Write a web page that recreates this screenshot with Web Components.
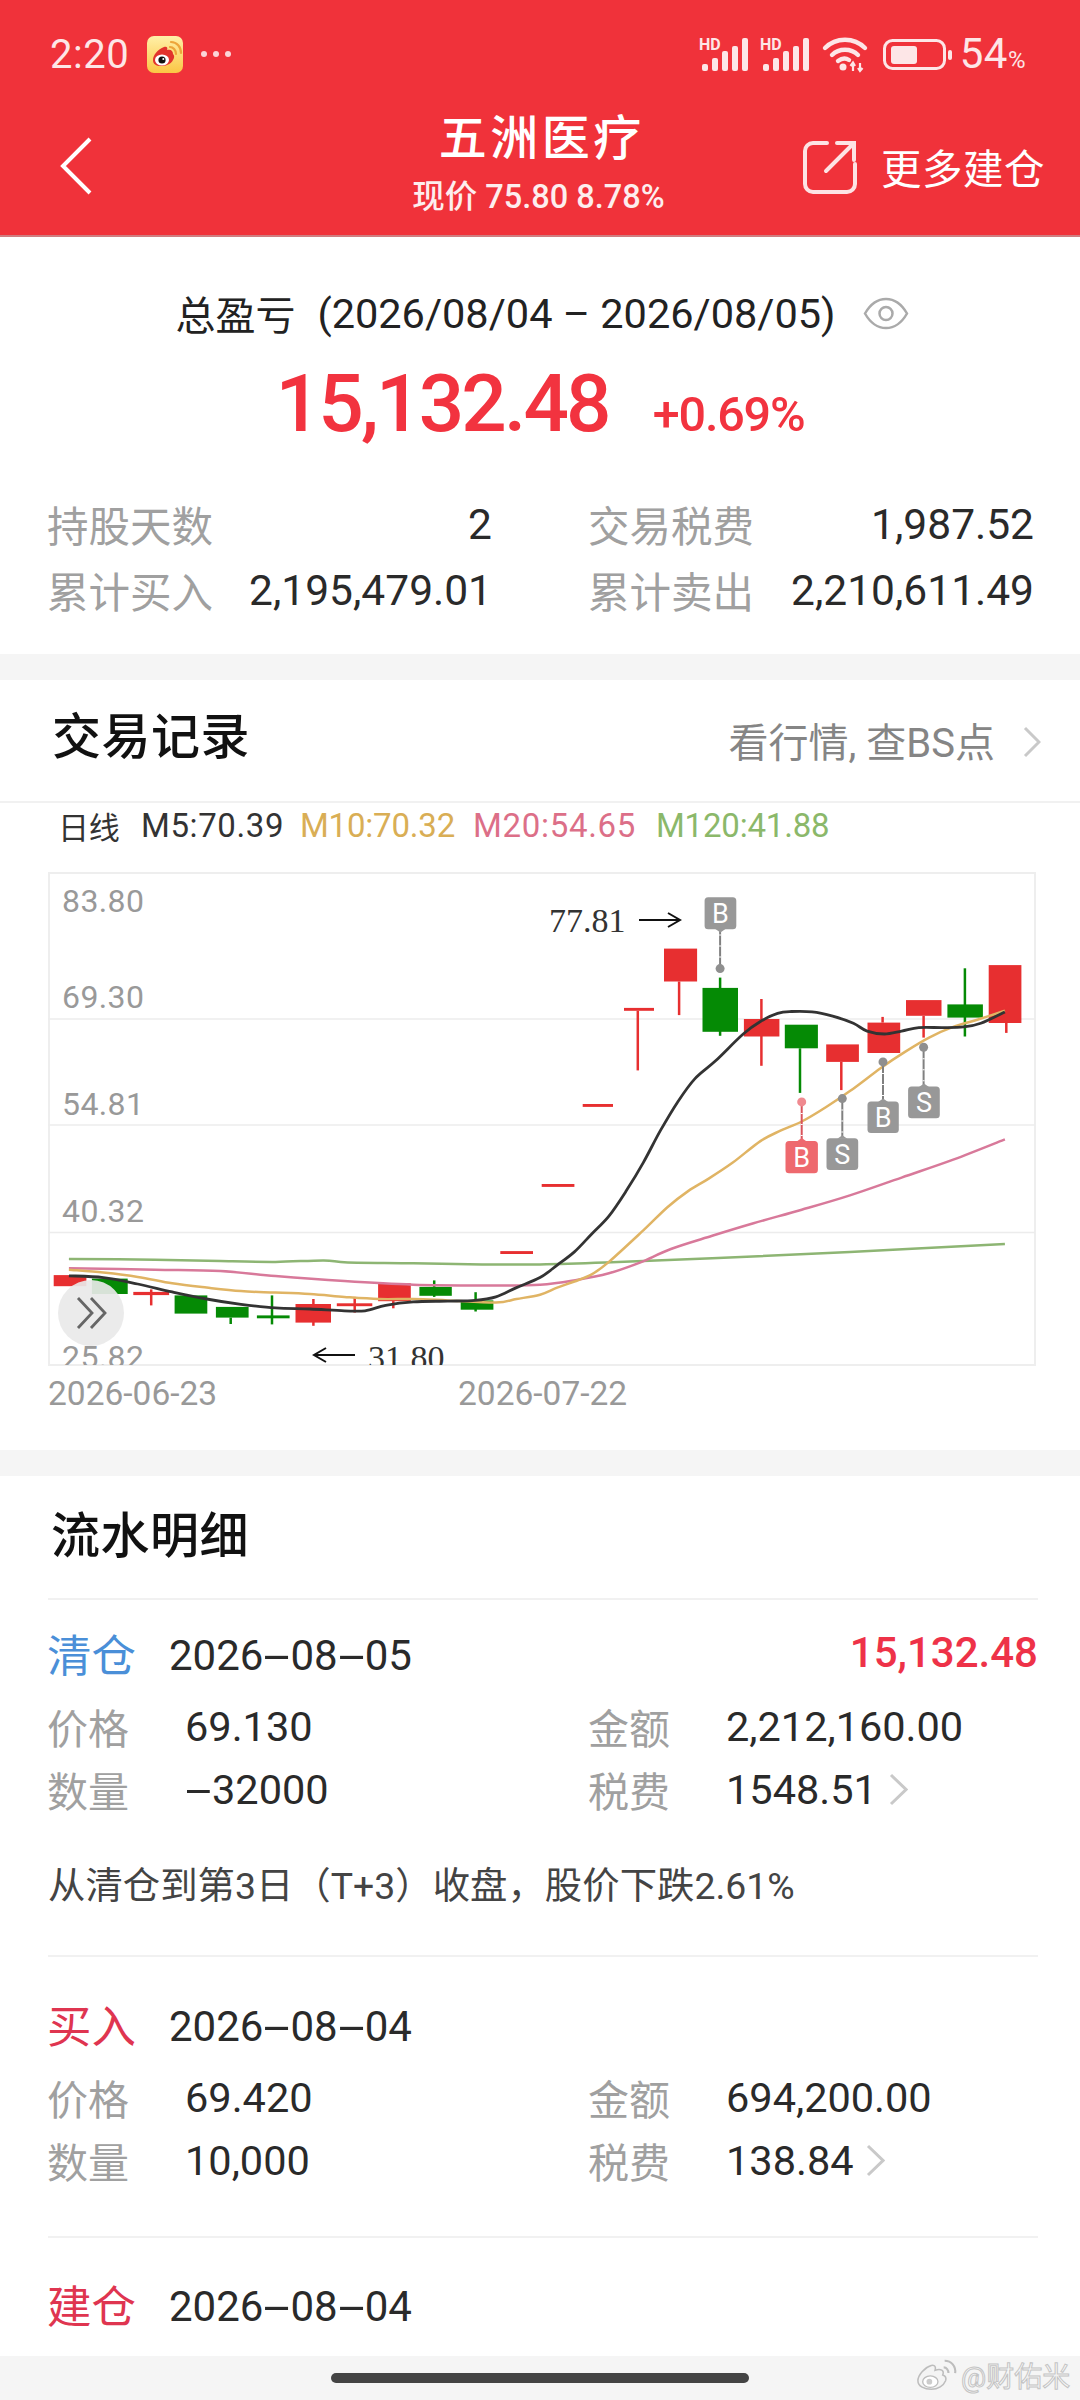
<!DOCTYPE html>
<html lang="zh-CN">
<head>
<meta charset="utf-8">
<title>五洲医疗</title>
<style>
  html,body{margin:0;padding:0;background:#fff}
  body{width:1080px;height:2400px;overflow:hidden;display:flex;flex-direction:column;position:relative;
    font-family:Roboto,"Noto Sans CJK SC",sans-serif;color:#333}
</style>
</head>
<body>
<status-bar></status-bar>
<nav-header></nav-header>

<profit-summary></profit-summary>
<gap-band></gap-band>

<trade-chart></trade-chart>
<gap-band></gap-band>

<flow-section>
  <flow-item style="--pt:32px" kind-color="#4a8fd8">
    <span slot="kind">清仓</span>
    <span slot="date">2026<wide-dash>-</wide-dash>08<wide-dash>-</wide-dash>05</span>
    <span slot="pl">15,132.48</span>
    <kv-pair label="价格">69.130</kv-pair>
    <kv-pair label="金额">2,212,160.00</kv-pair>
    <kv-pair label="数量"><wide-dash>-</wide-dash>32000</kv-pair>
    <kv-pair label="税费" arrow>1548.51</kv-pair>
    <span slot="note">从清仓到第3日（T+3）收盘，股价下跌2.61%</span>
  </flow-item>
  <flow-item style="--pt:46px" kind-color="#df3550">
    <span slot="kind">买入</span>
    <span slot="date">2026<wide-dash>-</wide-dash>08<wide-dash>-</wide-dash>04</span>
    <kv-pair label="价格">69.420</kv-pair>
    <kv-pair label="金额">694,200.00</kv-pair>
    <kv-pair label="数量">10,000</kv-pair>
    <kv-pair label="税费" arrow>138.84</kv-pair>
  </flow-item>
  <flow-item style="--pt:45px" kind-color="#df3550" compact>
    <span slot="kind">建仓</span>
    <span slot="date">2026<wide-dash>-</wide-dash>08<wide-dash>-</wide-dash>04</span>
  </flow-item>
</flow-section>

<home-bar></home-bar>

<script>
function define(name, html, extra){
  customElements.define(name, class extends HTMLElement{
    constructor(){
      super();
      const r=this.attachShadow({mode:'open'});
      r.innerHTML=html;
    }
    connectedCallback(){ if(extra) extra.call(this,this.shadowRoot); }
  });
}

const bars=`<g fill="#fde6e7"><text x="0" y="12" font-family="Roboto" font-size="16" font-weight="700">HD</text>
    <rect x="3" y="26" width="6" height="7" rx="2"/><rect x="13" y="20" width="6" height="13" rx="2"/><rect x="23" y="13" width="6" height="20" rx="2"/><rect x="33" y="8" width="6" height="25" rx="2"/><rect x="43" y="0" width="6" height="33" rx="2"/></g>`;

define('status-bar',`
<style>
:host{display:flex;align-items:center;height:108px;box-sizing:border-box;background:#f0323a;color:#fde6e7;padding:0 54px 0 50px;flex:none}
.time{font-size:40px;width:97px;letter-spacing:.5px}
.dots{margin-left:18px;display:flex;gap:6px}
.dots i{width:6px;height:6px;border-radius:50%;background:#fbd5d7;margin-right:0}
.right{margin-left:auto;display:flex;align-items:center}
svg{display:block;overflow:visible}
.pct{font-size:42px;margin-left:9px;line-height:1;display:flex;align-items:baseline;letter-spacing:.5px}
.pct small{font-size:24px}
</style>
<span class="time">2:20</span>
<svg width="36" height="37" viewBox="0 0 36 37">
  <defs><linearGradient id="wb" x1="0" y1="0" x2="0" y2="1"><stop offset="0" stop-color="#fff0a8"/><stop offset="1" stop-color="#fbc644"/></linearGradient></defs>
  <rect width="36" height="37" rx="7" fill="url(#wb)"/>
  <path d="M6 24c0-5 5-11 11-13 3-1 4 1 3 3 4-1 6 1 6 4 1 1 2 3 0 6-2 4-7 6-12 6-5 0-8-2-8-6z" fill="#e2332c"/>
  <ellipse cx="15" cy="24" rx="7" ry="5.5" fill="#fff"/><circle cx="15" cy="24" r="3.6" fill="#111"/><circle cx="16.3" cy="23" r="1" fill="#fff"/>
  <path d="M23 11c3 0 6 3 6 7M24 6c6 0 10 5 10 11" fill="none" stroke="#eda53a" stroke-width="2.2" stroke-linecap="round"/>
</svg>
<span class="dots"><i></i><i></i><i></i></span>
<span class="right">
  <svg width="50" height="33" viewBox="0 0 50 33" style="margin-right:11px">${bars}</svg>
  <svg width="50" height="33" viewBox="0 0 50 33" style="margin-right:12px">${bars}</svg>
  <svg width="46" height="35" viewBox="0 0 46 35" style="margin-right:15px"><g fill="none" stroke="#fde6e7" stroke-width="4.4" stroke-linecap="round"><path d="M3 11c11-11 29-11 40 0"/><path d="M10 18c7-7 19-7 26 0"/><path d="M16 24c4-3 8-3 11-1"/></g><circle cx="21" cy="30" r="3.5" fill="#fde6e7"/><path d="M31 26v8M38 26v8M28.500 29l2.500-3.500 2 3.500M36 31l2 3 2.500-3" fill="none" stroke="#fde6e7" stroke-width="2.200"/></svg>
  <svg width="70" height="31" viewBox="0 0 70 31"><rect x="1.500" y="1.500" width="60" height="28" rx="8" fill="none" stroke="#fde6e7" stroke-width="3"/><rect x="8" y="7" width="26" height="18" rx="3" fill="#fde6e7"/><rect x="65" y="11" width="4" height="10" rx="2" fill="#fde6e7"/></svg>
  <span class="pct" style="margin-left:7px">54<small>%</small></span>
</span>`);

define('nav-header',`
<style>
:host{display:grid;grid-template-columns:1fr auto 1fr;height:129px;box-sizing:border-box;background:#f0323a;border-bottom:2px solid #cf7d80;color:#fff;flex:none}
.back{padding:29px 0 0 60px}
.mid{text-align:center;margin-top:3px}
.t{font-size:48px;line-height:56px;font-weight:500;letter-spacing:3.500px;margin-right:-3.500px}
.s{font-size:32.500px;line-height:40px;margin-top:10px;color:#fdeeee;font-weight:500;margin-left:-3px}
.more{display:flex;justify-content:flex-end;align-items:flex-start;padding:32px 35px 0 0;font-size:40.500px;line-height:50px}
.more svg{margin-right:24px}
.more span{letter-spacing:.5px;margin-top:5px}
svg{display:block}
</style>
<div class="back"><svg width="32" height="58" viewBox="0 0 32 58"><path d="M30 2 3 29l27 27" fill="none" stroke="#fff" stroke-width="4"/></svg></div>
<div class="mid"><div class="t">五洲医疗</div><div class="s">现价 75.80 8.78%</div></div>
<div class="more"><svg width="54" height="54" viewBox="0 0 54 54"><path d="M24 3H10A8 8 0 0 0 2 11v33a8 8 0 0 0 8 8h34a8 8 0 0 0 8-8V24" fill="none" stroke="#fde3e4" stroke-width="4" stroke-linecap="round"/><path d="M23 31 50 4M34 3h17v17" fill="none" stroke="#fde3e4" stroke-width="4" stroke-linecap="round"/></svg><span>更多建仓</span></div>`);

define('profit-summary',`
<style>
:host{display:block;height:417px;box-sizing:border-box;padding-top:55px;background:#fff;flex:none}
.range{display:flex;justify-content:center;align-items:center;height:42px;font-size:40px;color:#222;padding-left:4px}
.range b{font-weight:400}
.range span{margin-left:22px;font-size:41.500px;white-space:pre}
.range svg{margin-left:27px}
.profit{display:flex;justify-content:center;align-items:baseline;height:84px;margin-top:28px;color:#f2333f}
.big{font-size:80px;font-weight:500;line-height:84px;letter-spacing:-2.800px}
.pc{font-size:48.500px;margin-left:44px;font-weight:500;letter-spacing:-1.200px}
.grid{display:grid;grid-template-columns:445px 446px;column-gap:96px;padding-left:47px;margin-top:45px;grid-auto-rows:66px}
.cell{display:flex;justify-content:space-between;align-items:center;font-size:42.500px;color:#2a2a2a}
.cell span{font-size:41.500px;color:#a0a0a0}
</style>
<div class="range"><b>总盈亏</b><span>(2026/08/04 – 2026/08/05)</span>
<svg width="46" height="33" viewBox="0 0 46 33"><path d="M2 16.500C8 6 15 2 23 2s15 4 21 14.500C38 27 31 31 23 31S8 27 2 16.500z" fill="none" stroke="#aaa" stroke-width="2.500"/><circle cx="23" cy="16.500" r="6.500" fill="none" stroke="#aaa" stroke-width="2.500"/></svg></div>
<div class="profit"><span class="big">15,132.48</span><span class="pc">+0.69%</span></div>
<div class="grid">
  <div class="cell"><span>持股天数</span>2</div>
  <div class="cell"><span>交易税费</span>1,987.52</div>
  <div class="cell"><span>累计买入</span>2,195,479.01</div>
  <div class="cell"><span>累计卖出</span>2,210,611.49</div>
</div>`);

define('gap-band',`<style>:host{display:block;height:26px;background:#f5f5f5;flex:none}</style>`);

const X=(z,s)=>s?540+z/2.904:z/2.904, Y=z=>860+z/2.8, f=n=>n.toFixed(1);
const candles=[
 [0,156,251,1165,1196,'r'],[0,267,371,1175,1218,'g'],[0,387,491,1212,1221,'r',439,1205,1250],
 [0,507,602,1222,1273,'g'],[0,627,722,1254,1284,'g',670,1284,1302],[0,746,841,1278,1286,'g',790,1222,1303],
 [0,858,961,1246,1298,'r',910,1232,1307],[0,978,1081,1244,1252,'r',1030,1226,1270],[0,1098,1193,1188,1238,'r',1142,1238,1258],
 [0,1218,1312,1198,1223,'g',1261,1180,1226],[0,1338,1433,1236,1262,'g',1381,1213,1267],[0,1453,1548,1098,1106,'r'],
 [1,5,100,910,918,'r'],[1,124,212,686,694,'r'],[1,244,331,417,425,'r',284,425,592],[1,360,456,251,343,'r',404,343,437],
 [1,472,575,361,484,'g',523,332,495],[1,592,695,448,497,'r',643,392,579],[1,711,807,464,530,'g',755,530,655],
 [1,831,926,519,568,'r',875,568,647],[1,951,1046,458,543,'r',995,442,458],[1,1063,1166,395,439,'r',1114,439,500],
 [1,1183,1286,407,444,'g',1234,306,497],[1,1303,1398,297,459,'r',1354,459,487]];
const lines={
 '#8db573':[[[200,1120],[450,1122],[640,1126],[800,1128],[940,1124],[1010,1130],[1200,1132],[1400,1135]],[[0,1135],[190,1130],[500,1118],[900,1100],[1350,1078]]],
 '#d8799a':[[[200,1146],[450,1150],[640,1154],[800,1168],[1000,1182],[1200,1192],[1400,1194]],[[0,1192],[110,1178],[200,1160],[290,1130],[380,1092],[500,1055],[620,1020],[760,982],[900,942],[1050,892],[1200,842],[1350,785]]],
 '#e0b464':[[[200,1150],[300,1158],[400,1170],[500,1188],[600,1200],[700,1210],[800,1214],[900,1218],[1000,1226],[1100,1232],[1200,1232],[1300,1236],[1440,1242],[1500,1232]],[[0,1220],[50,1200],[100,1183],[150,1163],[200,1128],[300,1040],[370,975],[430,930],[490,895],[560,850],[640,790],[700,760],[760,735],[830,695],[900,650],[990,585],[1060,540],[1130,500],[1200,470],[1270,450],[1350,425]]],
 '#333333':[[[200,1167],[300,1172],[400,1190],[500,1212],[600,1232],[700,1247],[800,1257],[900,1260],[1000,1265],[1060,1265],[1120,1250],[1200,1240],[1300,1238],[1380,1236],[1440,1226],[1500,1200]],[[0,1172],[50,1137],[100,1100],[150,1050],[200,1000],[250,930],[300,850],[350,760],[400,680],[450,615],[510,565],[590,490],[640,455],[690,432],[730,427],[790,428],[850,440],[910,460],[950,482],[1000,490],[1050,482],[1100,472],[1170,472],[1230,470],[1280,460],[1350,428]]]
};
function smooth(pts){
  let d='M'+f(pts[0][0])+' '+f(pts[0][1]);
  for(let i=0;i<pts.length-1;i++){
    const p0=pts[i-1]||pts[i],p1=pts[i],p2=pts[i+1],p3=pts[i+2]||p2;
    d+='C'+f(p1[0]+(p2[0]-p0[0])/6)+' '+f(p1[1]+(p2[1]-p0[1])/6)+' '+f(p2[0]-(p3[0]-p1[0])/6)+' '+f(p2[1]-(p3[1]-p1[1])/6)+' '+f(p2[0])+' '+f(p2[1]);
  }
  return d;
}
function chartBody(){
  const col={r:'#e72f30',g:'#058a05'}; let s='';
  s+='<rect x="49" y="874" width="986" height="492" fill="#fff" stroke="#eeeeee" stroke-width="2"/>';
  [1020,1126,1233.5].forEach(y=>s+=`<line x1="48" x2="1035" y1="${y}" y2="${y}" stroke="#ececec" stroke-width="1.500"/>`);
  [['83.80',913],['69.30',1009],['54.81',1116],['40.32',1223],['25.82',1369]].forEach(a=>s+=`<text x="62" y="${a[1]}" class="ax" clip-path="url(#cp)">${a[0]}</text>`);
  candles.forEach(c=>{
    const [side,x1,x2,y1,y2,k,wx,w1,w2]=c;
    if(wx!==undefined) s+=`<line x1="${f(X(wx,side))}" x2="${f(X(wx,side))}" y1="${f(Y(w1))}" y2="${f(Y(w2))}" stroke="${col[k]}" stroke-width="2.500"/>`;
    s+=`<rect x="${f(X(x1,side))}" y="${f(Y(y1))}" width="${f((x2-x1)/2.904)}" height="${f((y2-y1)/2.8)}" fill="${col[k]}"/>`;
  });
  for(const c in lines){
    const pts=lines[c][0].map(p=>[X(p[0],0),Y(p[1])]).concat(lines[c][1].map(p=>[X(p[0],1),Y(p[1])]));
    s+=`<path d="${smooth(pts)}" fill="none" stroke="${c}" stroke-width="${c==='#333333'?2.800:2.500}"/>`;
  }
  [[478,570,107,197,'B','#989898','#8f8f8f',523,307],
   [713,807,790,880,'B','#ee696e','#f08a90',760,680],
   [832,924,782,871,'S','#989898','#8f8f8f',878,671],
   [951,1042,679,767,'B','#989898','#8f8f8f',996,568],
   [1069,1161,637,726,'S','#989898','#8f8f8f',1114,527]].forEach(m=>{
    const [a,b,t,u,l,c,dc,dx,dy]=m, xx=f(X(dx,1)), w=(b-a)/2.904, h=(u-t)/2.8, bx=X(a,1), by=Y(t), below=dy<t;
    s+=`<line x1="${xx}" x2="${xx}" y1="${f(Y(dy))}" y2="${f(below?by:by+h)}" stroke="${l==='B'&&c==='#ee696e'?'#d9545c':'#808080'}" stroke-width="2"/>`;
    s+=`<line x1="${xx}" x2="${xx}" y1="${f(Y(dy))}" y2="${f(below?by:by+h)}" stroke="#fff" stroke-width="2" stroke-dasharray="1 10" />`;
    s+=`<circle cx="${xx}" cy="${f(Y(dy))}" r="4.500" fill="${dc}"/>`;
    s+=`<rect x="${f(bx)}" y="${f(by)}" width="${f(w)}" height="${f(h)}" rx="3.500" fill="${c}"/>`;
    const ty=below?by-3:by+h+3;
    s+=`<path d="M${f(bx+w/2-5)} ${f(below?by+.5:by+h-.5)}L${f(bx+w/2)} ${f(ty)}L${f(bx+w/2+5)} ${f(below?by+.5:by+h-.5)}z" fill="${c}"/>`;
    s+=`<text x="${f(bx+w/2)}" y="${f(by+h/2+9.500)}" text-anchor="middle" class="mk">${l}</text>`;
  });
  s+=`<text x="549" y="933" class="ex">77.81</text>`;
  s+=`<path d="M639 921H679M668 914l12 7-12 7" fill="none" stroke="#111" stroke-width="2"/>`;
  s+=`<path d="M355 1356H315M326 1349l-12 7 12 7" fill="none" stroke="#111" stroke-width="2"/>`;
  s+=`<text x="368" y="1370" class="ex" clip-path="url(#cp)">31.80</text>`;
  s+=`<circle cx="91" cy="1314" r="33" fill="#e9e9e9" fill-opacity=".92"/>`;
  s+=`<path d="M78 1299l14 15-14 15M91 1299l14 15-14 15" fill="none" stroke="#666" stroke-width="2.800"/>`;
  return s;
}
define('trade-chart',`
<style>
:host{display:block;height:770px;background:#fff;flex:none;position:relative}
.head{display:flex;align-items:center;height:123px;box-sizing:border-box;padding:0 39px 6px 52px;border-bottom:2px solid #f1f1f1;margin-bottom:0}
.head h2{margin:0;font-size:49px;font-weight:500;color:#111;letter-spacing:.5px;line-height:1}
.link{margin-left:auto;display:flex;align-items:center;font-size:40px;color:#858585;padding-top:5px}
.link svg{margin-left:28px;margin-top:4px}
.legend{display:flex;height:44px;align-items:center;padding-left:58px;font-size:33px;margin-top:0;letter-spacing:-.2px;white-space:pre}
.legend span:nth-child(1){color:#333;width:83px;font-size:31px}
.legend span:nth-child(2){color:#333;width:159px;letter-spacing:.6px}
.legend span:nth-child(3){color:#d9ae55;width:173px}
.legend span:nth-child(4){color:#dc6f88;width:183px;letter-spacing:.7px}
.legend span:nth-child(5){color:#8bb86a}
svg.c{display:block;margin-top:18px}
.ax{font:32px Roboto,sans-serif;fill:#999;letter-spacing:.4px}
.mk{font:27px Roboto,sans-serif;fill:#fff}
.ex{font:34px "Liberation Serif",serif;fill:#333}
.dates{display:flex;font-size:33.500px;color:#999;padding-left:48px;height:34px;line-height:34px;margin-top:2px}
.dates span:first-child{width:410px}
</style>
<div class="head"><h2>交易记录</h2><div class="link">看行情, 查BS点<svg width="18" height="32" viewBox="0 0 18 32"><path d="M2 2l14 14L2 30" fill="none" stroke="#c9c9c9" stroke-width="3"/></svg></div></div>
<div class="legend"><span>日线</span><span>M5:70.39</span><span>M10:70.32</span><span>M20:54.65</span><span>M120:41.88</span></div>
<svg class="c" width="1080" height="510" viewBox="0 866 1080 510"><defs><clipPath id="cp"><rect x="48" y="873" width="987" height="493"/></clipPath></defs><g id="g"></g></svg>
<div class="dates"><span>2026-06-23</span><span>2026-07-22</span></div>`,
function(r){ r.getElementById('g').innerHTML=chartBody(); });

define('flow-section',`
<style>
:host{display:block;flex:1;min-height:0;overflow:hidden;background:#fff;padding:0 42px 0 48px}
h2{margin:0;font-size:49px;font-weight:500;color:#111;height:122px;box-sizing:border-box;line-height:121px;margin-left:3px;letter-spacing:.5px}
</style>
<h2>流水明细</h2><slot></slot>`);

define('flow-item',`
<style>
:host{display:block;border-top:2px solid #f1f1f1;padding-top:var(--pt,32px);padding-bottom:44px}
.top{display:flex;align-items:center;height:50px}
.kind{width:122px;font-size:44.500px;color:var(--kc);margin-left:-1px;position:relative;top:-5px}
.date{font-size:42px;color:#2a2a2a;position:relative;top:-2px}
.pl{margin-left:auto;font-size:42px;color:#ee3248;font-weight:500;position:relative;top:-5px}
.grid{display:grid;grid-template-columns:541px 1fr;grid-auto-rows:63px;margin-top:13px}
.note{display:block;font-size:37.400px;color:#444;line-height:50px;margin-top:40px}
:host([compact]) .grid{display:none}
</style>
<div class="top"><span class="kind"><slot name="kind"></slot></span><span class="date"><slot name="date"></slot></span><span class="pl"><slot name="pl"></slot></span></div>
<div class="grid"><slot></slot></div>
<div class="notewrap"><slot name="note" class="note"></slot></div>`,
function(r){
  this.style.setProperty('--kc',this.getAttribute('kind-color'));
  const w=r.querySelector('.notewrap');
  if(!this.querySelector('[slot=note]')) w.style.display='none';
});

define('kv-pair',`
<style>
:host{display:flex;align-items:center;font-size:41.500px;color:#2a2a2a}
.l{width:138px;font-size:41px;color:#a0a0a0;flex:none;margin-left:-1px;padding-right:1px;box-sizing:border-box;position:relative;top:-1px}
svg{margin-left:12px;display:none}
:host([arrow]) svg{display:block}
</style>
<span class="l"></span><slot></slot><svg width="19" height="33" viewBox="0 0 19 33"><path d="M2 2l15 14.500L2 31" fill="none" stroke="#c9c9c9" stroke-width="3"/></svg>`,
function(r){ r.querySelector('.l').textContent=this.getAttribute('label'); });

define('wide-dash',`
<style>:host{display:inline-block;width:27px;text-align:center;transform:scaleX(2.300)}</style><slot></slot>`);

define('home-bar',`
<style>
:host{display:flex;justify-content:center;align-items:flex-start;height:44px;background:#f5f5f5;flex:none;position:relative}
i{display:block;width:418px;height:10px;border-radius:5px;background:#444;margin-top:17px}
.wm{position:absolute;left:916px;top:2px;display:flex;align-items:center;font-size:28px;color:#f8f8f8;-webkit-text-stroke:1px #c4c4c4;white-space:nowrap;height:34px}
.wm svg{margin-right:3px}
</style>
<i></i>
<div class="wm"><svg width="42" height="34" viewBox="0 0 44 34"><path d="M2 23c0-6 7-14 14-16 4-1 5 2 4 5 6-2 10 0 8 5 3 1 4 3 3 6-2 5-8 9-15 9S2 29 2 23z" fill="#f4f4f4" stroke="#bdbdbd" stroke-width="1.600"/><ellipse cx="15" cy="24" rx="8" ry="6" fill="#fff" stroke="#bdbdbd" stroke-width="1.400"/><circle cx="14" cy="24" r="3" fill="#ccc"/><path d="M29 9c3 0 5 3 5 6M30 2c7 0 12 6 11 13" fill="none" stroke="#bdbdbd" stroke-width="2.200"/></svg><span>@财佑米</span></div>`);
</script>
</body>
</html>
